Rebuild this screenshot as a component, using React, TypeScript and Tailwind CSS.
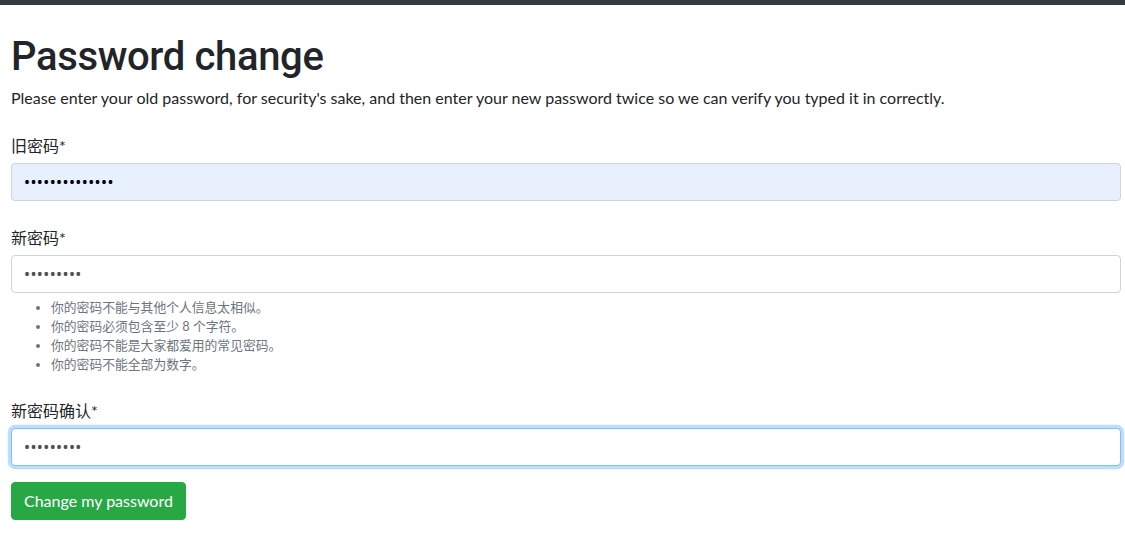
import { useEffect, useRef } from "react";

const hints = [
  "你的密码不能与其他个人信息太相似。",
  "你的密码必须包含至少 8 个字符。",
  "你的密码不能是大家都爱用的常见密码。",
  "你的密码不能全部为数字。",
];

const font = {
  fontFamily: 'Lato, "Noto Sans CJK SC", sans-serif',
};

// bullets in Noto Sans are closer to the original dots
const inputFont = {
  fontFamily: '"Noto Sans", sans-serif',
};

const PasswordChangePage = () => {
  const confirmRef = useRef<HTMLInputElement>(null);

  useEffect(() => {
    confirmRef.current?.focus();
  }, []);

  return (
    <div className="min-h-screen bg-white text-[#212529]" style={font}>
      {/* top bar */}
      <div className="h-[5px] bg-[#343a40]" />

      <main className="pl-[11px] pr-[4px] pt-[25px]">
        <h1
          className="text-[40px] font-medium leading-[1.2] tracking-[-0.35px] pt-[3px] mb-[5px]"
          style={{ fontFamily: 'Roboto, sans-serif' }}
        >
          Password change
        </h1>
        <p className="text-base leading-6 mb-[21px]">
          Please enter your old password, for security's sake, and then enter your new password twice so
          we can verify you typed it in correctly.
        </p>

        <form onSubmit={(e) => e.preventDefault()}>
          {/* 旧密码 */}
          <div className="mb-[22px]">
            <label htmlFor="old" className="block text-base leading-6 pt-[3px] mb-[5px]">
              旧密码*
            </label>
            <input
              id="old"
              type="password"
              defaultValue="oldpassword123"
              className="block w-full h-[38px] px-3 py-1.5 text-base tracking-[0.4px] text-black bg-[#e8f0fe] border border-[#ced4da] rounded outline-none"
              style={inputFont}
            />
          </div>

          {/* 新密码 */}
          <div className="mb-[22px]">
            <label htmlFor="new1" className="block text-base leading-6 pt-[3px] mb-[5px]">
              新密码*
            </label>
            <input
              id="new1"
              type="password"
              defaultValue="newpass12"
              className="block w-full h-[38px] px-3 py-1.5 text-base tracking-[0.4px] text-[#495057] bg-white border border-[#ced4da] rounded outline-none"
              style={inputFont}
            />
            <ul className="mt-[4.5px] pl-10 list-disc text-[12.8px] leading-[19.2px] text-[#6c757d]">
              {hints.map((h) => (
                <li key={h}>{h}</li>
              ))}
            </ul>
          </div>

          {/* 新密码确认 */}
          <div className="mb-4">
            <label htmlFor="new2" className="block text-base leading-6 pt-[3px] mb-[5px]">
              新密码确认*
            </label>
            <input
              id="new2"
              ref={confirmRef}
              type="password"
              defaultValue="newpass12"
              className="block w-full h-[38px] px-3 py-1.5 text-base tracking-[0.4px] text-[#495057] bg-white border border-[#80bdff] rounded outline-none shadow-[0_0_0_3.2px_rgba(0,123,255,0.25)]"
              style={inputFont}
            />
          </div>

          <button
            type="submit"
            className="h-[38px] px-3 text-base text-white bg-[#28a745] border border-[#28a745] rounded"
          >
            Change my password
          </button>
        </form>
      </main>
    </div>
  );
};

export default PasswordChangePage;
